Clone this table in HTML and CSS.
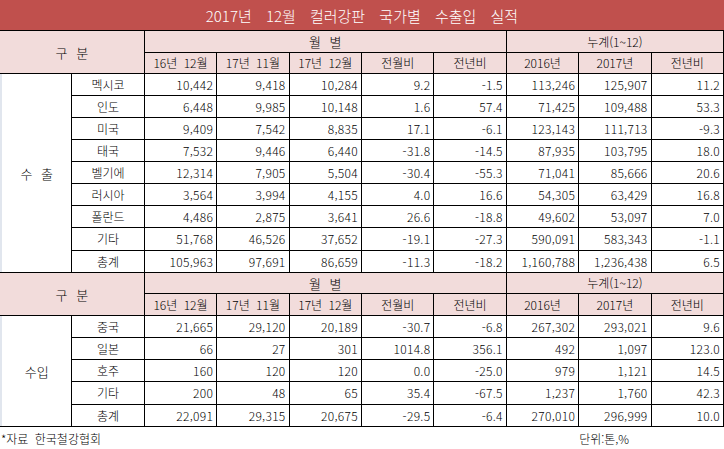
FILE: index.html
```html
<!DOCTYPE html>
<html lang="ko">
<head>
<meta charset="utf-8">
<link rel="stylesheet" href="styles.css">
</head>
<body>
<div class="sheet">
  <div class="title">2017년 12월 컬러강판 국가별 수출입 실적</div>
  <div class="grid">
    <div class="c h gubun">구 분</div>
    <div class="c h monthly">월 별</div>
    <div class="c h cumul">누계(1~12)</div>
    <div class="c h">16년 12월</div>
    <div class="c h">17년 11월</div>
    <div class="c h">17년 12월</div>
    <div class="c h">전월비</div>
    <div class="c h">전년비</div>
    <div class="c h">2016년</div>
    <div class="c h">2017년</div>
    <div class="c h">전년비</div>

    <div class="c cat exp">수 출</div>
    <div class="c name">멕시코</div><div class="c n">10,442</div><div class="c n">9,418</div><div class="c n">10,284</div><div class="c n">9.2</div><div class="c n">-1.5</div><div class="c n">113,246</div><div class="c n">125,907</div><div class="c n">11.2</div>
    <div class="c name">인도</div><div class="c n">6,448</div><div class="c n">9,985</div><div class="c n">10,148</div><div class="c n">1.6</div><div class="c n">57.4</div><div class="c n">71,425</div><div class="c n">109,488</div><div class="c n">53.3</div>
    <div class="c name">미국</div><div class="c n">9,409</div><div class="c n">7,542</div><div class="c n">8,835</div><div class="c n">17.1</div><div class="c n">-6.1</div><div class="c n">123,143</div><div class="c n">111,713</div><div class="c n">-9.3</div>
    <div class="c name">태국</div><div class="c n">7,532</div><div class="c n">9,446</div><div class="c n">6,440</div><div class="c n">-31.8</div><div class="c n">-14.5</div><div class="c n">87,935</div><div class="c n">103,795</div><div class="c n">18.0</div>
    <div class="c name">벨기에</div><div class="c n">12,314</div><div class="c n">7,905</div><div class="c n">5,504</div><div class="c n">-30.4</div><div class="c n">-55.3</div><div class="c n">71,041</div><div class="c n">85,666</div><div class="c n">20.6</div>
    <div class="c name">러시아</div><div class="c n">3,564</div><div class="c n">3,994</div><div class="c n">4,155</div><div class="c n">4.0</div><div class="c n">16.6</div><div class="c n">54,305</div><div class="c n">63,429</div><div class="c n">16.8</div>
    <div class="c name">폴란드</div><div class="c n">4,486</div><div class="c n">2,875</div><div class="c n">3,641</div><div class="c n">26.6</div><div class="c n">-18.8</div><div class="c n">49,602</div><div class="c n">53,097</div><div class="c n">7.0</div>
    <div class="c name">기타</div><div class="c n">51,768</div><div class="c n">46,526</div><div class="c n">37,652</div><div class="c n">-19.1</div><div class="c n">-27.3</div><div class="c n">590,091</div><div class="c n">583,343</div><div class="c n">-1.1</div>
    <div class="c name">총계</div><div class="c n">105,963</div><div class="c n">97,691</div><div class="c n">86,659</div><div class="c n">-11.3</div><div class="c n">-18.2</div><div class="c n">1,160,788</div><div class="c n">1,236,438</div><div class="c n">6.5</div>

    <div class="c h gubun">구 분</div>
    <div class="c h monthly">월 별</div>
    <div class="c h cumul">누계(1~12)</div>
    <div class="c h">16년 12월</div>
    <div class="c h">17년 11월</div>
    <div class="c h">17년 12월</div>
    <div class="c h">전월비</div>
    <div class="c h">전년비</div>
    <div class="c h">2016년</div>
    <div class="c h">2017년</div>
    <div class="c h">전년비</div>

    <div class="c cat imp">수입</div>
    <div class="c name">중국</div><div class="c n">21,665</div><div class="c n">29,120</div><div class="c n">20,189</div><div class="c n">-30.7</div><div class="c n">-6.8</div><div class="c n">267,302</div><div class="c n">293,021</div><div class="c n">9.6</div>
    <div class="c name">일본</div><div class="c n">66</div><div class="c n">27</div><div class="c n">301</div><div class="c n">1014.8</div><div class="c n">356.1</div><div class="c n">492</div><div class="c n">1,097</div><div class="c n">123.0</div>
    <div class="c name">호주</div><div class="c n">160</div><div class="c n">120</div><div class="c n">120</div><div class="c n">0.0</div><div class="c n">-25.0</div><div class="c n">979</div><div class="c n">1,121</div><div class="c n">14.5</div>
    <div class="c name">기타</div><div class="c n">200</div><div class="c n">48</div><div class="c n">65</div><div class="c n">35.4</div><div class="c n">-67.5</div><div class="c n">1,237</div><div class="c n">1,760</div><div class="c n">42.3</div>
    <div class="c name">총계</div><div class="c n">22,091</div><div class="c n">29,315</div><div class="c n">20,675</div><div class="c n">-29.5</div><div class="c n">-6.4</div><div class="c n">270,010</div><div class="c n">296,999</div><div class="c n">10.0</div>
  </div>
  <div class="footer">
    <div class="source">*자료 한국철강협회</div>
    <div class="unit">단위:톤,%</div>
  </div>
</div>
</body>
</html>
```

FILE: styles.css
```css
html, body {
  margin: 0;
  padding: 0;
  background: #ffffff;
}

.sheet {
  width: 724px;
  height: 449px;
  overflow: hidden;
  font-family: "Noto Sans CJK KR", "Noto Sans", sans-serif;
  font-size: 12px;
  font-weight: 300;
  word-spacing: 3px;
  color: #000000;
}

.title {
  height: 30px;
  background: #c0504d;
  color: #ffffff;
  font-size: 15px;
  word-spacing: 10px;
  display: flex;
  align-items: center;
  justify-content: center;
}

.grid {
  display: grid;
  grid-template-columns: repeat(10, 1fr);
  grid-template-rows:
    21px 20px
    21px 21px 21px 21px 21px 21px 21px 22px 21px
    20px 21px
    21px 21px 21px 22px 21px;
  gap: 1px;
  background: #000000;
  border-top: 1px solid #000000;
  border-bottom: 1px solid #000000;
  border-right: 1px solid #000000;
}

.c {
  background: #ffffff;
  display: flex;
  align-items: center;
  justify-content: center;
  white-space: nowrap;
  line-height: 1;
}

.h {
  background: #f2dcdb;
}

.gubun {
  grid-column: 1 / 3;
  grid-row: span 2;
  font-size: 13px;
  word-spacing: 5px;
}

.monthly {
  grid-column: 3 / 8;
  font-size: 13px;
  word-spacing: 5px;
}

.cumul {
  grid-column: 8 / 11;
}

.cat {
  grid-column: 1;
  font-size: 13px;
  word-spacing: 5px;
  border-left: 2px solid #e1e6ee;
}

.exp {
  grid-row: span 9;
}

.imp {
  grid-row: span 5;
}

.n {
  justify-content: flex-end;
  padding-right: 3px;
  font-variant-numeric: tabular-nums;
  letter-spacing: 0.3px;
}

.footer {
  height: 22px;
  display: grid;
  grid-template-columns: repeat(10, 1fr);
  column-gap: 1px;
  padding-right: 1px;
  align-items: center;
}

.source {
  grid-column: 1 / 5;
  padding-left: 1px;
}

.unit {
  grid-column: 9 / 11;
}
```
